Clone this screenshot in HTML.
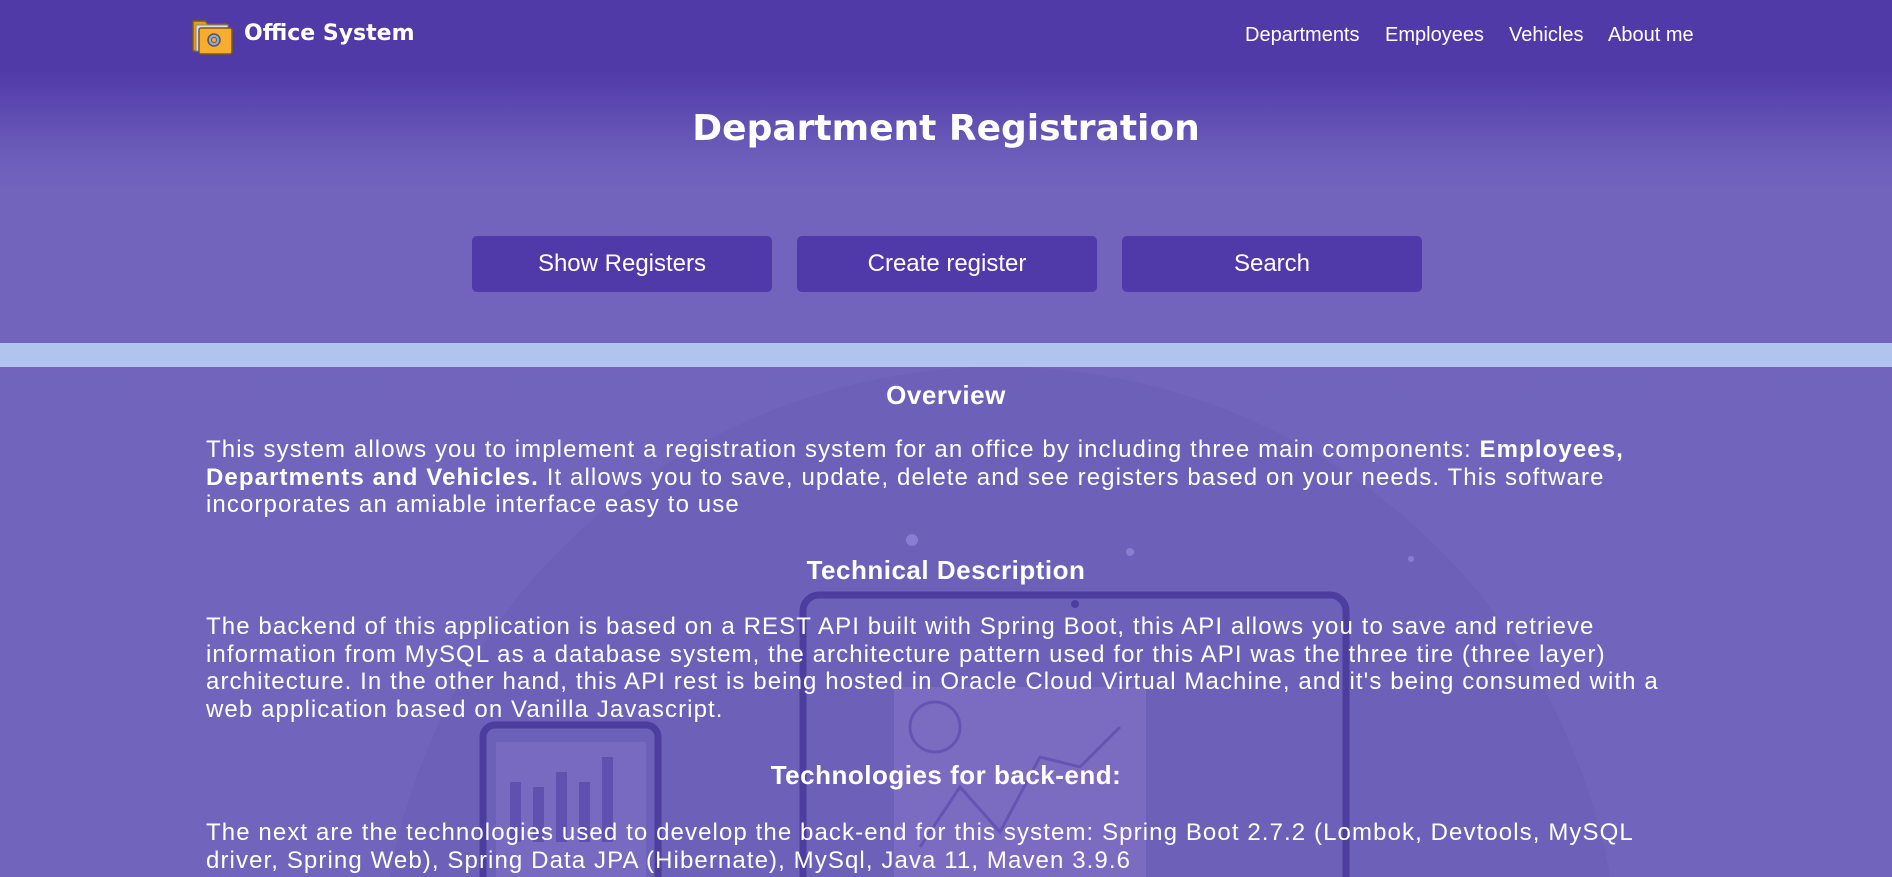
<!DOCTYPE html>
<html><head><meta charset="utf-8"><style>
*{margin:0;padding:0;box-sizing:border-box}
html,body{width:1892px;height:877px;overflow:hidden}
body{position:relative;font-family:"Liberation Sans",sans-serif;color:#fff;
background:linear-gradient(#503aa8 0px,#503aa8 70px,#6a5bb9 150px,#7264bd 190px,#7064bc 877px);}
.abs{position:absolute}
.nav a{position:absolute;top:24px;font-size:20px;color:#fff;text-decoration:none}
.btn{position:absolute;top:236px;width:300px;height:56px;background:#5039a8;border-radius:5px;font-size:24px;text-align:center;line-height:56px}
.band{position:absolute;left:0;top:343px;width:1892px;height:24px;background:#b1c4ee}
h2{position:absolute;left:0;width:1892px;text-align:center;font-size:26px;font-weight:bold;letter-spacing:0.5px}
.p{position:absolute;left:206px;font-size:24px;line-height:27.5px;white-space:nowrap;letter-spacing:1.1px}
</style></head><body>
<svg class="abs" style="left:0;top:367px" width="1892" height="510">
 <circle cx="1000" cy="620" r="620" fill="#6a5cb6" opacity="0.5"/>
 <g fill="none" stroke="#4d3d9e" stroke-width="7">
  <rect x="803" y="228" width="543" height="330" rx="16"/>
  <rect x="483" y="358" width="175" height="200" rx="12"/>
 </g>
 <circle cx="1075" cy="237" r="4" fill="#4d3d9e"/>
 <rect x="894" y="320" width="252" height="200" fill="#8272c6" opacity="0.7"/>
 <rect x="496" y="375" width="150" height="160" fill="#8272c6" opacity="0.6"/>
 <g fill="#5b4aad" opacity="0.8">
  <rect x="510" y="415" width="11" height="60"/><rect x="533" y="420" width="11" height="55"/><rect x="556" y="405" width="11" height="70"/><rect x="579" y="415" width="11" height="60"/><rect x="602" y="390" width="11" height="85"/>
 </g>
 <g fill="none" stroke="#6654b3" stroke-width="3">
  <circle cx="935" cy="360" r="25"/>
  <polyline points="920,480 960,420 1000,465 1040,390 1080,400 1120,360"/>
 </g>
 <circle cx="912" cy="173" r="6" fill="#8a7cd0"/>
 <circle cx="1130" cy="185" r="4" fill="#8a7cd0"/>
 <circle cx="1411" cy="192" r="3" fill="#8a7cd0"/>
</svg>
<svg class="abs" style="left:191px;top:17px" width="42" height="38" viewBox="0 0 42 38">
 <path d="M2 4h12l3 3h18v27H2z" fill="#e79a1c" stroke="#7a5a20" stroke-width="1.5"/>
 <rect x="5" y="8" width="32" height="26" fill="#ddd" stroke="#888"/>
 <rect x="8" y="11" width="33" height="26" rx="2" fill="#f7ad2f" stroke="#7a5a20" stroke-width="1.5"/>
 <circle cx="23" cy="23" r="6" fill="#9aa6c8" stroke="#556" stroke-width="1.5"/>
 <circle cx="23" cy="23" r="2.5" fill="#f7ad2f" stroke="#556"/>
</svg>
<div class="abs" style="left:244px;top:21px;font-size:22px;font-weight:bold;font-family:'DejaVu Sans',sans-serif">Office System</div>
<div class="nav"><a style="left:1245px">Departments</a><a style="left:1385px">Employees</a><a style="left:1509px">Vehicles</a><a style="left:1608px">About me</a></div>
<div class="abs" style="left:0;width:1892px;top:108px;text-align:center;font-size:36px;font-weight:bold;font-family:'DejaVu Sans',sans-serif">Department Registration</div>
<div class="btn" style="left:472px">Show Registers</div>
<div class="btn" style="left:797px">Create register</div>
<div class="btn" style="left:1122px">Search</div>
<div class="band"></div>
<h2 style="top:380px">Overview</h2>
<div class="p" style="top:436px">This system allows you to implement a registration system for an office by including three main components: <b>Employees,</b><br><b>Departments and Vehicles.</b> It allows you to save, update, delete and see registers based on your needs. This software<br>incorporates an amiable interface easy to use</div>
<h2 style="top:555px">Technical Description</h2>
<div class="p" style="top:613px">The backend of this application is based on a REST API built with Spring Boot, this API allows you to save and retrieve<br>information from MySQL as a database system, the architecture pattern used for this API was the three tire (three layer)<br>architecture. In the other hand, this API rest is being hosted in Oracle Cloud Virtual Machine, and it's being consumed with a<br>web application based on Vanilla Javascript.</div>
<h2 style="top:760px">Technologies for back-end:</h2>
<div class="p" style="top:819px">The next are the technologies used to develop the back-end for this system: Spring Boot 2.7.2 (Lombok, Devtools, MySQL<br>driver, Spring Web), Spring Data JPA (Hibernate), MySql, Java 11, Maven 3.9.6</div>
</body></html>
